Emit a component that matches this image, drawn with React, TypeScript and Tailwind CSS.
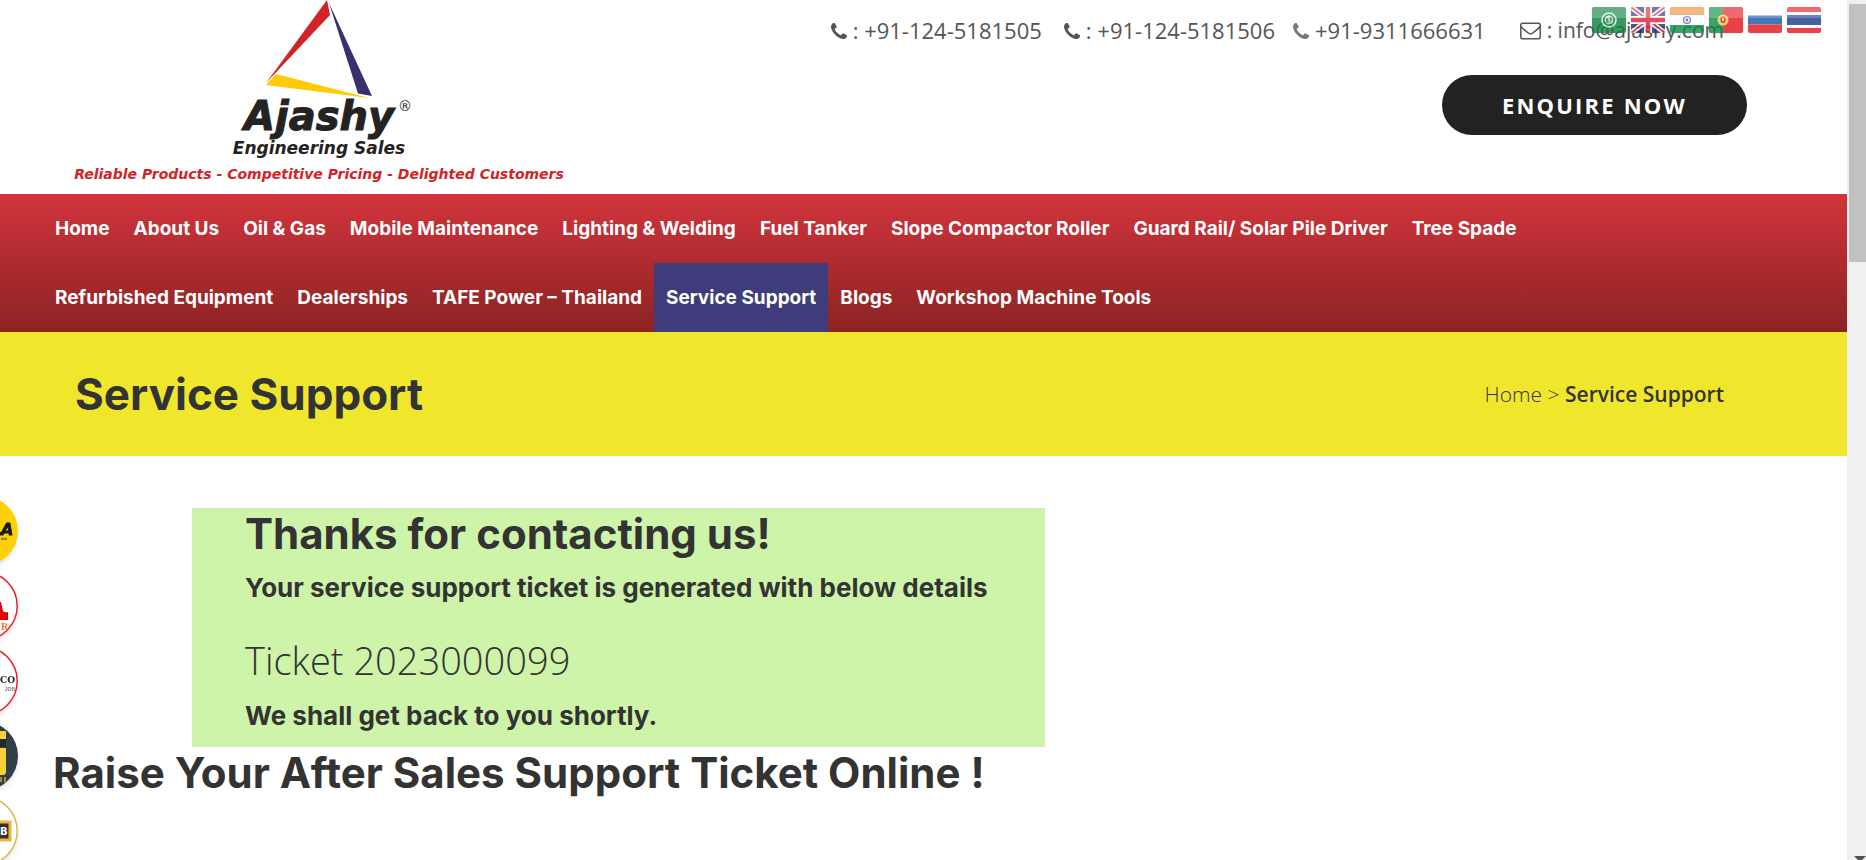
const navItems = [
  "Home",
  "About Us",
  "Oil & Gas",
  "Mobile Maintenance",
  "Lighting & Welding",
  "Fuel Tanker",
  "Slope Compactor Roller",
  "Guard Rail/ Solar Pile Driver",
  "Tree Spade",
  "Refurbished Equipment",
  "Dealerships",
  "TAFE Power – Thailand",
  "Service Support",
  "Blogs",
  "Workshop Machine Tools",
];

function PhoneIcon({ className }: { className: string }) {
  return (
    <svg viewBox="0 0 1408 1408" className={className} fill="currentColor" aria-hidden="true">
      <path d="M1408 1112q0 27-10 70.5t-21 68.5q-21 50-122 106-94 51-186 51-27 0-53-3.5t-57.5-12.5-47-14.5-55.5-20.5-49-18q-98-35-175-83-127-79-264-216t-216-264q-48-77-83-175-3-9-18-49t-20.5-55.5-14.5-47-12.5-57.5-3.5-53q0-92 51-186 56-101 106-122 25-11 68.5-21t70.5-10q14 0 21 3 18 6 53 76 11 19 30 54t35 63.5 31 53.5q3 4 17.5 25t21.5 35.5 7 28.5q0 20-28.5 50t-62 55-62 53-28.5 46q0 9 5 22.5t8.5 20.5 14 24 11.5 19q76 137 174 235t235 174q2 1 19 11.5t24 14 20.5 8.5 22.5 5q18 0 46-28.5t53-62 55-62 50-28.5q14 0 28.5 7t35.5 21.5 25 17.5q25 15 53.5 31t63.5 35 54 30q70 35 76 53 3 7 3 21z" />
    </svg>
  );
}

function MailIcon() {
  return (
    <svg viewBox="0 0 21 18" className="h-[18px] w-[21px]" fill="none" stroke="currentColor" strokeWidth="1.5" aria-hidden="true">
      <rect x="0.8" y="1.3" width="19.4" height="15.4" rx="1.8" />
      <path d="M1 4.5 Q3 7 8.3 11 Q10.5 12.8 12.7 11 Q18 7 20 4.5" />
    </svg>
  );
}

function Logo() {
  return (
    <a href="#home" className="flex w-[500px] flex-col items-center font-['DejaVu_Sans',sans-serif] font-bold italic text-[#242321]">
      <svg viewBox="0 0 108 100" className="h-[100px] w-[108px]" aria-hidden="true">
        <path d="M62 0 L65 15 L1 83 Z" fill="#d22327" />
        <path d="M64 3 L107 96 L93 93.5 Z" fill="#38306f" />
        <path d="M11 74 L1 85 L104 98 Z" fill="#ffcb05" />
      </svg>
      <span className="relative text-[40px] leading-8 [-webkit-text-stroke:1px_#242321]">
        Ajashy
        <sup className="absolute top-0 left-full ml-1 text-sm leading-3 font-normal not-italic [-webkit-text-stroke:0]">®</sup>
      </span>
      <span className="pt-1 text-[17px] leading-6">Engineering Sales</span>
      <span className="pt-1 text-sm leading-5 whitespace-nowrap text-[#d22327]">
        Reliable Products - Competitive Pricing - Delighted Customers
      </span>
    </a>
  );
}

function Flag({ name, children }: { name: string; children: React.ReactNode }) {
  return (
    <button type="button" aria-label={name} className="h-[26px] w-[34px] overflow-hidden rounded-xs shadow-sm">
      <svg viewBox="0 0 34 26" className="block h-full w-full" aria-hidden="true">
        {children}
        <rect width="34" height="11" fill="#fff" opacity=".22" />
      </svg>
    </button>
  );
}

function Flags() {
  return (
    <div className="absolute top-[7px] right-[26px] flex gap-[5px] opacity-80">
      <Flag name="Arabic">
        <rect width="34" height="26" fill="#0a7f3c" />
        <circle cx="17" cy="13" r="7" fill="none" stroke="#cfe8d6" strokeWidth="1.6" />
        <circle cx="17" cy="13" r="3.6" fill="none" stroke="#cfe8d6" strokeWidth="1.3" />
        <path d="M14 9 L20 16 M17 8v9" stroke="#cfe8d6" />
      </Flag>
      <Flag name="English">
        <rect width="34" height="26" fill="#1c2a7c" />
        <path d="M0 0 L34 26 M34 0 L0 26" stroke="#fff" strokeWidth="5" />
        <path d="M0 0 L34 26 M34 0 L0 26" stroke="#d8213b" strokeWidth="1.8" />
        <path d="M17 0v26 M0 13h34" stroke="#fff" strokeWidth="8" />
        <path d="M17 0v26 M0 13h34" stroke="#d8213b" strokeWidth="4.5" />
      </Flag>
      <Flag name="Hindi">
        <rect width="34" height="26" fill="#fff" />
        <rect width="34" height="8" fill="#f58a3c" />
        <rect y="18" width="34" height="8" fill="#0a8a43" />
        <circle cx="17" cy="13" r="3.4" fill="none" stroke="#4a5fb0" strokeWidth="1.2" />
        <circle cx="17" cy="13" r="1.4" fill="#4a5fb0" />
      </Flag>
      <Flag name="Portuguese">
        <rect width="34" height="26" fill="#e3131b" />
        <rect width="14" height="26" fill="#0a8a43" />
        <circle cx="14" cy="13" r="5.5" fill="#f0cf30" />
        <rect x="11.5" y="9.5" width="5" height="6.5" rx="2" fill="#e3131b" />
        <rect x="13" y="11" width="2" height="3" fill="#fff" />
      </Flag>
      <Flag name="Russian">
        <rect width="34" height="26" fill="#fff" />
        <rect y="8.5" width="34" height="9" fill="#1358a8" />
        <rect y="17.5" width="34" height="8.5" fill="#e3131b" />
      </Flag>
      <Flag name="Thai">
        <rect width="34" height="26" fill="#e3131b" />
        <rect y="5" width="34" height="16" fill="#fff" />
        <rect y="8" width="34" height="10" fill="#173a87" />
      </Flag>
    </div>
  );
}

function Brands() {
  const circle = "h-[70px] w-[70px] rounded-full shadow-md";
  return (
    <div className="fixed top-[496px] -left-[52px] flex flex-col gap-[5px] font-['DejaVu_Sans',sans-serif] font-bold">
      <a href="#brand-1" className={circle}>
        <svg viewBox="0 0 70 70" aria-hidden="true">
          <circle cx="35" cy="35" r="35" fill="#fdd006" />
          <path d="M44 27h4l-2 9h7v3H41Z" fill="#1b1b1b" />
          <text x="53" y="39" fontSize="16" fontStyle="italic" fill="#1b1b1b" stroke="#1b1b1b" strokeWidth="0.8">A</text>
          <text x="53" y="44" fontSize="3" fill="#5a4c10">IGN</text>
        </svg>
      </a>
      <a href="#brand-2" className={circle}>
        <svg viewBox="0 0 70 70" aria-hidden="true">
          <circle cx="35" cy="35" r="34.2" fill="#fff" stroke="#f01c2c" strokeWidth="1.5" />
          <path d="M40 31h13l2 9q2 2 5 1v8H40Z" fill="#e60000" />
          <text x="53" y="59" fontSize="10" fontFamily="Liberation Serif" fill="#ee7623">R</text>
        </svg>
      </a>
      <a href="#brand-3" className={circle}>
        <svg viewBox="0 0 70 70" aria-hidden="true">
          <circle cx="35" cy="35" r="34.2" fill="#fff" stroke="#f01c2c" strokeWidth="1.5" />
          <text x="67" y="37" textAnchor="end" fontSize="9" fontFamily="DejaVu Serif" fill="#222">CO</text>
          <text x="67" y="45" textAnchor="end" fontSize="5" fontFamily="Liberation Sans" fill="#777">JOB</text>
        </svg>
      </a>
      <a href="#brand-4" className={circle}>
        <svg viewBox="0 0 70 70" aria-hidden="true">
          <circle cx="35" cy="35" r="35" fill="#313d47" />
          <rect x="34" y="10" width="24" height="8" fill="#f7cf3a" />
          <rect x="30" y="18" width="28" height="8" fill="#1c2731" />
          <path d="M40 27h18v24q0 3 -3 3H40Z" fill="#f7cf3a" />
          <path d="M53 56v5M57 56v5" stroke="#c6a634" strokeWidth="1.5" />
        </svg>
      </a>
      <a href="#brand-5" className={circle}>
        <svg viewBox="0 0 70 70" aria-hidden="true">
          <circle cx="35" cy="35" r="34.2" fill="#fff" stroke="#d8b84a" strokeWidth="1.5" />
          <rect x="20" y="26" width="42" height="18" fill="#33302c" stroke="#edb53f" strokeWidth="3" />
          <text x="52" y="39" fontSize="10" fill="#fff">B</text>
        </svg>
      </a>
    </div>
  );
}

function TopBar() {
  return (
    <header className="relative flex h-[194px] justify-between pr-[100px] pl-[69px]">
      <Logo />
      <div className="flex flex-col items-end gap-[30px] pt-4 font-['Open_Sans',sans-serif]">
        <div className="flex items-center gap-[18px] pr-[23px] text-[22px] leading-[29px] font-medium text-[#555]">
          <a href="tel:+911245181505" className="flex items-center gap-1.5 pr-1">
            <PhoneIcon className="h-4 w-4" />: +91-124-5181505
          </a>
          <a href="tel:+911245181506" className="flex items-center gap-1.5">
            <PhoneIcon className="h-4 w-4" />: +91-124-5181506
          </a>
          <a href="tel:+919311666631" className="flex items-center gap-1.5">
            <PhoneIcon className="h-4 w-4 text-[#777]" />+91-9311666631
          </a>
          <a href="mailto:info@ajashy.com" className="flex items-center gap-1.5 pl-4 text-[21px]">
            <MailIcon />: info@ajashy.com
          </a>
        </div>
        <button type="button" className="h-[60px] w-[305px] rounded-full bg-[#222] text-[22px] font-bold tracking-widest text-white">
          ENQUIRE NOW
        </button>
      </div>
      <Flags />
    </header>
  );
}

export default function App() {
  return (
    <div className="flex h-screen overflow-hidden bg-white text-[#333]">
      <div className="min-w-0 flex-1">
        <TopBar />
        <nav className="bg-linear-to-b from-[#d3343c] to-[#8b2323] pr-[100px] pl-[43px]">
          <ul className="flex flex-wrap font-['Inter',sans-serif] text-[19px] font-bold text-white">
            {navItems.map((item) => (
              <li key={item}>
                <a
                  href="#page"
                  className={
                    item === "Service Support"
                      ? "block bg-[#3e3c7b] px-3 leading-[69px]"
                      : "block px-3 leading-[69px]"
                  }
                >
                  {item}
                </a>
              </li>
            ))}
          </ul>
        </nav>
        <section className="flex h-[124px] items-center justify-between bg-[#f0e72d] pr-[123px] pl-[75px]">
          <h1 className="font-['Inter',sans-serif] text-[44px] font-bold">Service Support</h1>
          <p className="pt-0.5 font-['Open_Sans',sans-serif] text-[21px] font-light">
            <a href="#home">Home</a> &gt; <strong className="font-semibold">Service Support</strong>
          </p>
        </section>
        <main className="px-[53px] pt-[52px] font-['Inter',sans-serif]">
          <section className="ml-[139px] h-[239px] w-[853px] bg-[#cdf4a9] px-[53px]">
            <h2 className="text-[42px] leading-[52px] font-bold">Thanks for contacting us!</h2>
            <h3 className="text-[26px] leading-[56px] font-bold">Your service support ticket is generated with below details</h3>
            <p className="pt-4 font-['Open_Sans',sans-serif] text-[38px] leading-[56px] font-light">Ticket 2023000099</p>
            <h3 className="text-[26px] leading-[56px] font-bold">We shall get back to you shortly.</h3>
          </section>
          <h2 className="text-[42px] leading-[52px] font-bold">Raise Your After Sales Support Ticket Online !</h2>
        </main>
      </div>
      <div className="flex w-[19px] flex-col items-end justify-between bg-[#f0f0f0] pt-1" aria-hidden="true">
        <div className="h-[258px] w-[17px] bg-[#c1c1c1]" />
        <svg viewBox="0 0 12 4" className="h-1 w-3">
          <path d="M0 0h12L8 4H4Z" fill="#505050" />
        </svg>
      </div>
      <Brands />
    </div>
  );
}
